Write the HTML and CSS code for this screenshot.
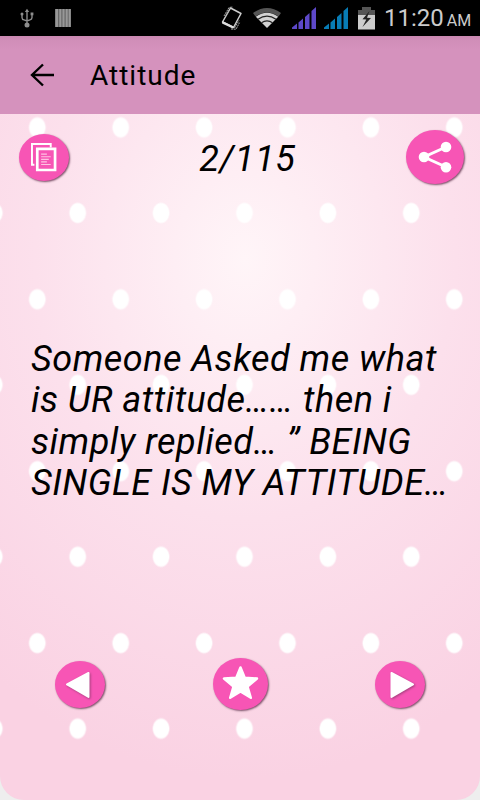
FILE: index.html
```html
<!DOCTYPE html>
<html lang="en">

<head>
    <meta charset="UTF-8">
    <meta name="viewport" content="width=device-width, initial-scale=1.0">
    <title>Attitude</title>
    <link rel="stylesheet" href="styles.css">
</head>

<body>
    <div class="status-bar">
        <svg class="usb" width="14" height="20" viewBox="0 0 14 20" fill="none" stroke="#8d8d8d" stroke-width="1.4">
            <path d="M7 2v15M2 6v3.5q0 2 2 2.4l3 1.1 3-1.1q2-.5 2-2.4V6" />
            <path d="M4.8 4 7 .8 9.2 4z" fill="#8d8d8d" stroke="none" />
            <circle cx="2" cy="6" r="1.5" fill="#8d8d8d" stroke="none" />
            <path d="M10.6 4.5h2.8v2.8h-2.8z" fill="#8d8d8d" stroke="none" />
            <circle cx="7" cy="17" r="2.5" fill="#8d8d8d" stroke="none" />
        </svg>
        <svg class="bars" width="16" height="18" viewBox="0 0 16 18">
            <path d="M0 0h16v18H0z" fill="#666" />
            <path d="M.5 0H3v18H.5zM4.3 0h2v18h-2zM7.5 0h2v18h-2zM10.7 0h2v18h-2zM13.7 0h2v18h-2z" fill="#989898" />
        </svg>
        <div class="status-icons">
            <svg width="22" height="24" viewBox="0 0 22 24" fill="none">
                <path d="M9.5 2 20 7.5 12.5 21.5 1.5 16z" stroke="#ccc" stroke-width="1.5" stroke-linejoin="round" />
                <path d="M1.5 15 12.8 20.4 11.8 22.5 1 17.5z" fill="#ddd" />
                <path d="m3 10 5-8.5 4-.5M4.5 10.5l4-7M10 23l5 .2 3.5-6.5M13.5 22l4.5-7.5" stroke="#aaa" stroke-width="1" stroke-dasharray="2 .7" />
            </svg>
            <svg class="wifi" width="30" height="22" viewBox="0 0 30 22">
                <path d="M1 6Q15-4 29 6l-2.500 3.500Q15 1.500 3.500 9.500z" fill="#555" />
                <path d="M3.800 9.700Q15 2 26.200 9.700L15 21z" fill="#d2d2d2" />
                <path d="M6 12.300Q15 6 24 12.300M9.500 15.800Q15 12 20.500 15.800" fill="none" stroke="#222" stroke-width="1.200" />
            </svg>
            <svg class="signal" width="25" height="23" viewBox="0 0 25 23">
                <path d="M0 22v-1.500l5-4V22zM6.500 22v-6.500L11 11.500V22zM13 22V10l4.500-4v16zM19.500 22V4L24 0v22z" fill="#5d48c9" />
            </svg>
            <svg class="signal" width="25" height="23" viewBox="0 0 25 23">
                <path d="M0 22v-1.500l5-4V22zM6.500 22v-6.500L11 11.500V22zM13 22V10l4.500-4v16zM19.500 22V4L24 0v22z" fill="#087cb5" />
            </svg>
            <svg class="battery" width="17" height="23" viewBox="0 0 17 23">
                <path d="M0 3h4V0h9v3h4v6H0z" fill="#555" />
                <path d="M0 8h17v14.500H0z" fill="#ccc" />
                <path d="m11.500 4-7 8.300 3.800.2-3.800 7.500 8.500-9-4-.3z" fill="#222" />
            </svg>
        </div>
        <div class="clock">11:20</div>
        <div class="ampm">AM</div>
    </div>

    <header>
        <svg width="25" height="24" viewBox="0 0 25 24" fill="none" stroke="#000" stroke-width="2.400">
            <path d="M24 12H2M13 1.500 2 12l11 10.500" />
        </svg>
        <h1>Attitude</h1>
    </header>

    <main>
        <div class="toolbar">
            <button class="round-btn copy">
                <svg width="52" height="48" viewBox="0 0 52 48">
                    <path d="M16 32h-2.500V10.500H33V14" fill="none" stroke="#fff" stroke-width="2" />
                    <path d="M19 15.500h18.500v22H19z" fill="none" stroke="#fff" stroke-width="2.800" />
                    <path d="M23 21h6M23 23.700h10M23 26.400h8M23 29.100h6M23 31.800h10" stroke="#ffc2e3" stroke-width="1.200" />
                </svg>
            </button>
            <div class="counter">2/115</div>
            <button class="round-btn share">
                <svg width="58" height="54" viewBox="0 0 58 54" fill="#fff">
                    <path d="M40 17 18 27l22 10" fill="none" stroke="#fff" stroke-width="3" />
                    <circle cx="18" cy="27" r="5.300" />
                    <circle cx="40" cy="17" r="5.300" />
                    <circle cx="40" cy="37.300" r="5.300" />
                </svg>
            </button>
        </div>

        <p class="quote">Someone Asked me what<br>is UR attitude…… then i<br>simply replied… ” BEING<br>SINGLE IS MY ATTITUDE…</p>

        <div class="controls">
            <button class="round-btn">
                <svg class="glyph" width="50" height="47" viewBox="0 0 50 47">
                    <path d="M12 23.500 33.500 12v24z" fill="#fff" stroke="#fff" stroke-width="2" stroke-linejoin="round" />
                </svg>
            </button>
            <button class="round-btn star">
                <svg width="55" height="52" viewBox="0 0 55 52">
                    <path d="m27.500 9.500 4.200 10.200 12.300.8-9.500 8 3.300 11.300-10.300-6.300-10.300 6.300 3.300-11.300-9.500-8 12.300-.8z" fill="#fff" stroke="#fff" stroke-width="2.500" stroke-linejoin="round" />
                </svg>
            </button>
            <button class="round-btn">
                <svg class="glyph" width="50" height="47" viewBox="0 0 50 47">
                    <path d="M38 23.500 16.500 12v24z" fill="#fff" stroke="#fff" stroke-width="2" stroke-linejoin="round" />
                </svg>
            </button>
        </div>
    </main>
</body>

</html>
```
FILE: styles.css
```css
* {
    margin: 0;
    padding: 0;
    box-sizing: border-box;
}

body {
    width: 480px;
    height: 800px;
    display: flex;
    flex-direction: column;
    overflow: hidden;
    background-color: #eee;
    font-family: Roboto, sans-serif;
    color: #000;
}

/* Status bar */
.status-bar {
    height: 36px;
    display: flex;
    align-items: center;
    padding-left: 20px;
    background-color: #000;
    color: #ccc;
}

.bars {
    margin-left: 21px;
}

.status-icons {
    display: flex;
    align-items: center;
    margin-left: 150px;
}

.wifi {
    margin-left: 9px;
}

.signal {
    margin-left: 10px;
}

.signal + .signal {
    margin-left: 7px;
}

.battery {
    margin-left: 9px;
}

.clock {
    margin-left: 9px;
    font-size: 24px;
}

.ampm {
    margin-left: 3px;
    padding-top: 5px;
    font-size: 16px;
}

/* Title bar */
header {
    height: 78px;
    display: flex;
    align-items: center;
    padding-left: 30px;
    background: linear-gradient(#c988b1, #d08eb8 4px, #d592bd 14px);
}

header h1 {
    margin-left: 35px;
    font-size: 28px;
    font-weight: 400;
    letter-spacing: 1px;
}

/* Polka dot card */
main {
    flex: 1;
    display: flex;
    flex-direction: column;
    border-radius: 0 0 24px 24px;
    background:
        radial-gradient(9px 11px at center, #fff 83%, transparent) -4.400px -72.500px / 83.400px 171.900px,
        radial-gradient(9px 11px at center, #fff 83%, transparent) 36px 13px / 83.400px 171.900px,
        radial-gradient(420px 520px at 245px 145px, #fff5f8, #fce0ec 50%, #fad2e3);
}

.toolbar {
    height: 86px;
    display: flex;
    align-items: center;
    justify-content: space-between;
    padding: 0 16px 0 19px;
}

.counter {
    margin-left: 20px;
    padding-top: 4px;
    font-size: 36px;
    font-style: italic;
    letter-spacing: 0.7px;
}

.round-btn {
    width: 50px;
    height: 47px;
    display: flex;
    align-items: center;
    justify-content: center;
    border: none;
    border-radius: 50%;
    background-color: #f755b5;
    box-shadow: 1px 1px 2px #7b5068;
    cursor: pointer;
}

.share {
    width: 58px;
    height: 54px;
}

.star {
    width: 55px;
    height: 52px;
}

.glyph {
    filter: drop-shadow(1px 1px 1px #a3407c);
}

.quote {
    height: 166px;
    margin: 139px 0 0 31px;
    font-size: 36px;
    font-style: italic;
    letter-spacing: 0.5px;
    line-height: 41.400px;
    white-space: nowrap;
}

.controls {
    display: flex;
    align-items: center;
    justify-content: space-between;
    margin-top: 153px;
    padding: 0 55px;
}
```
